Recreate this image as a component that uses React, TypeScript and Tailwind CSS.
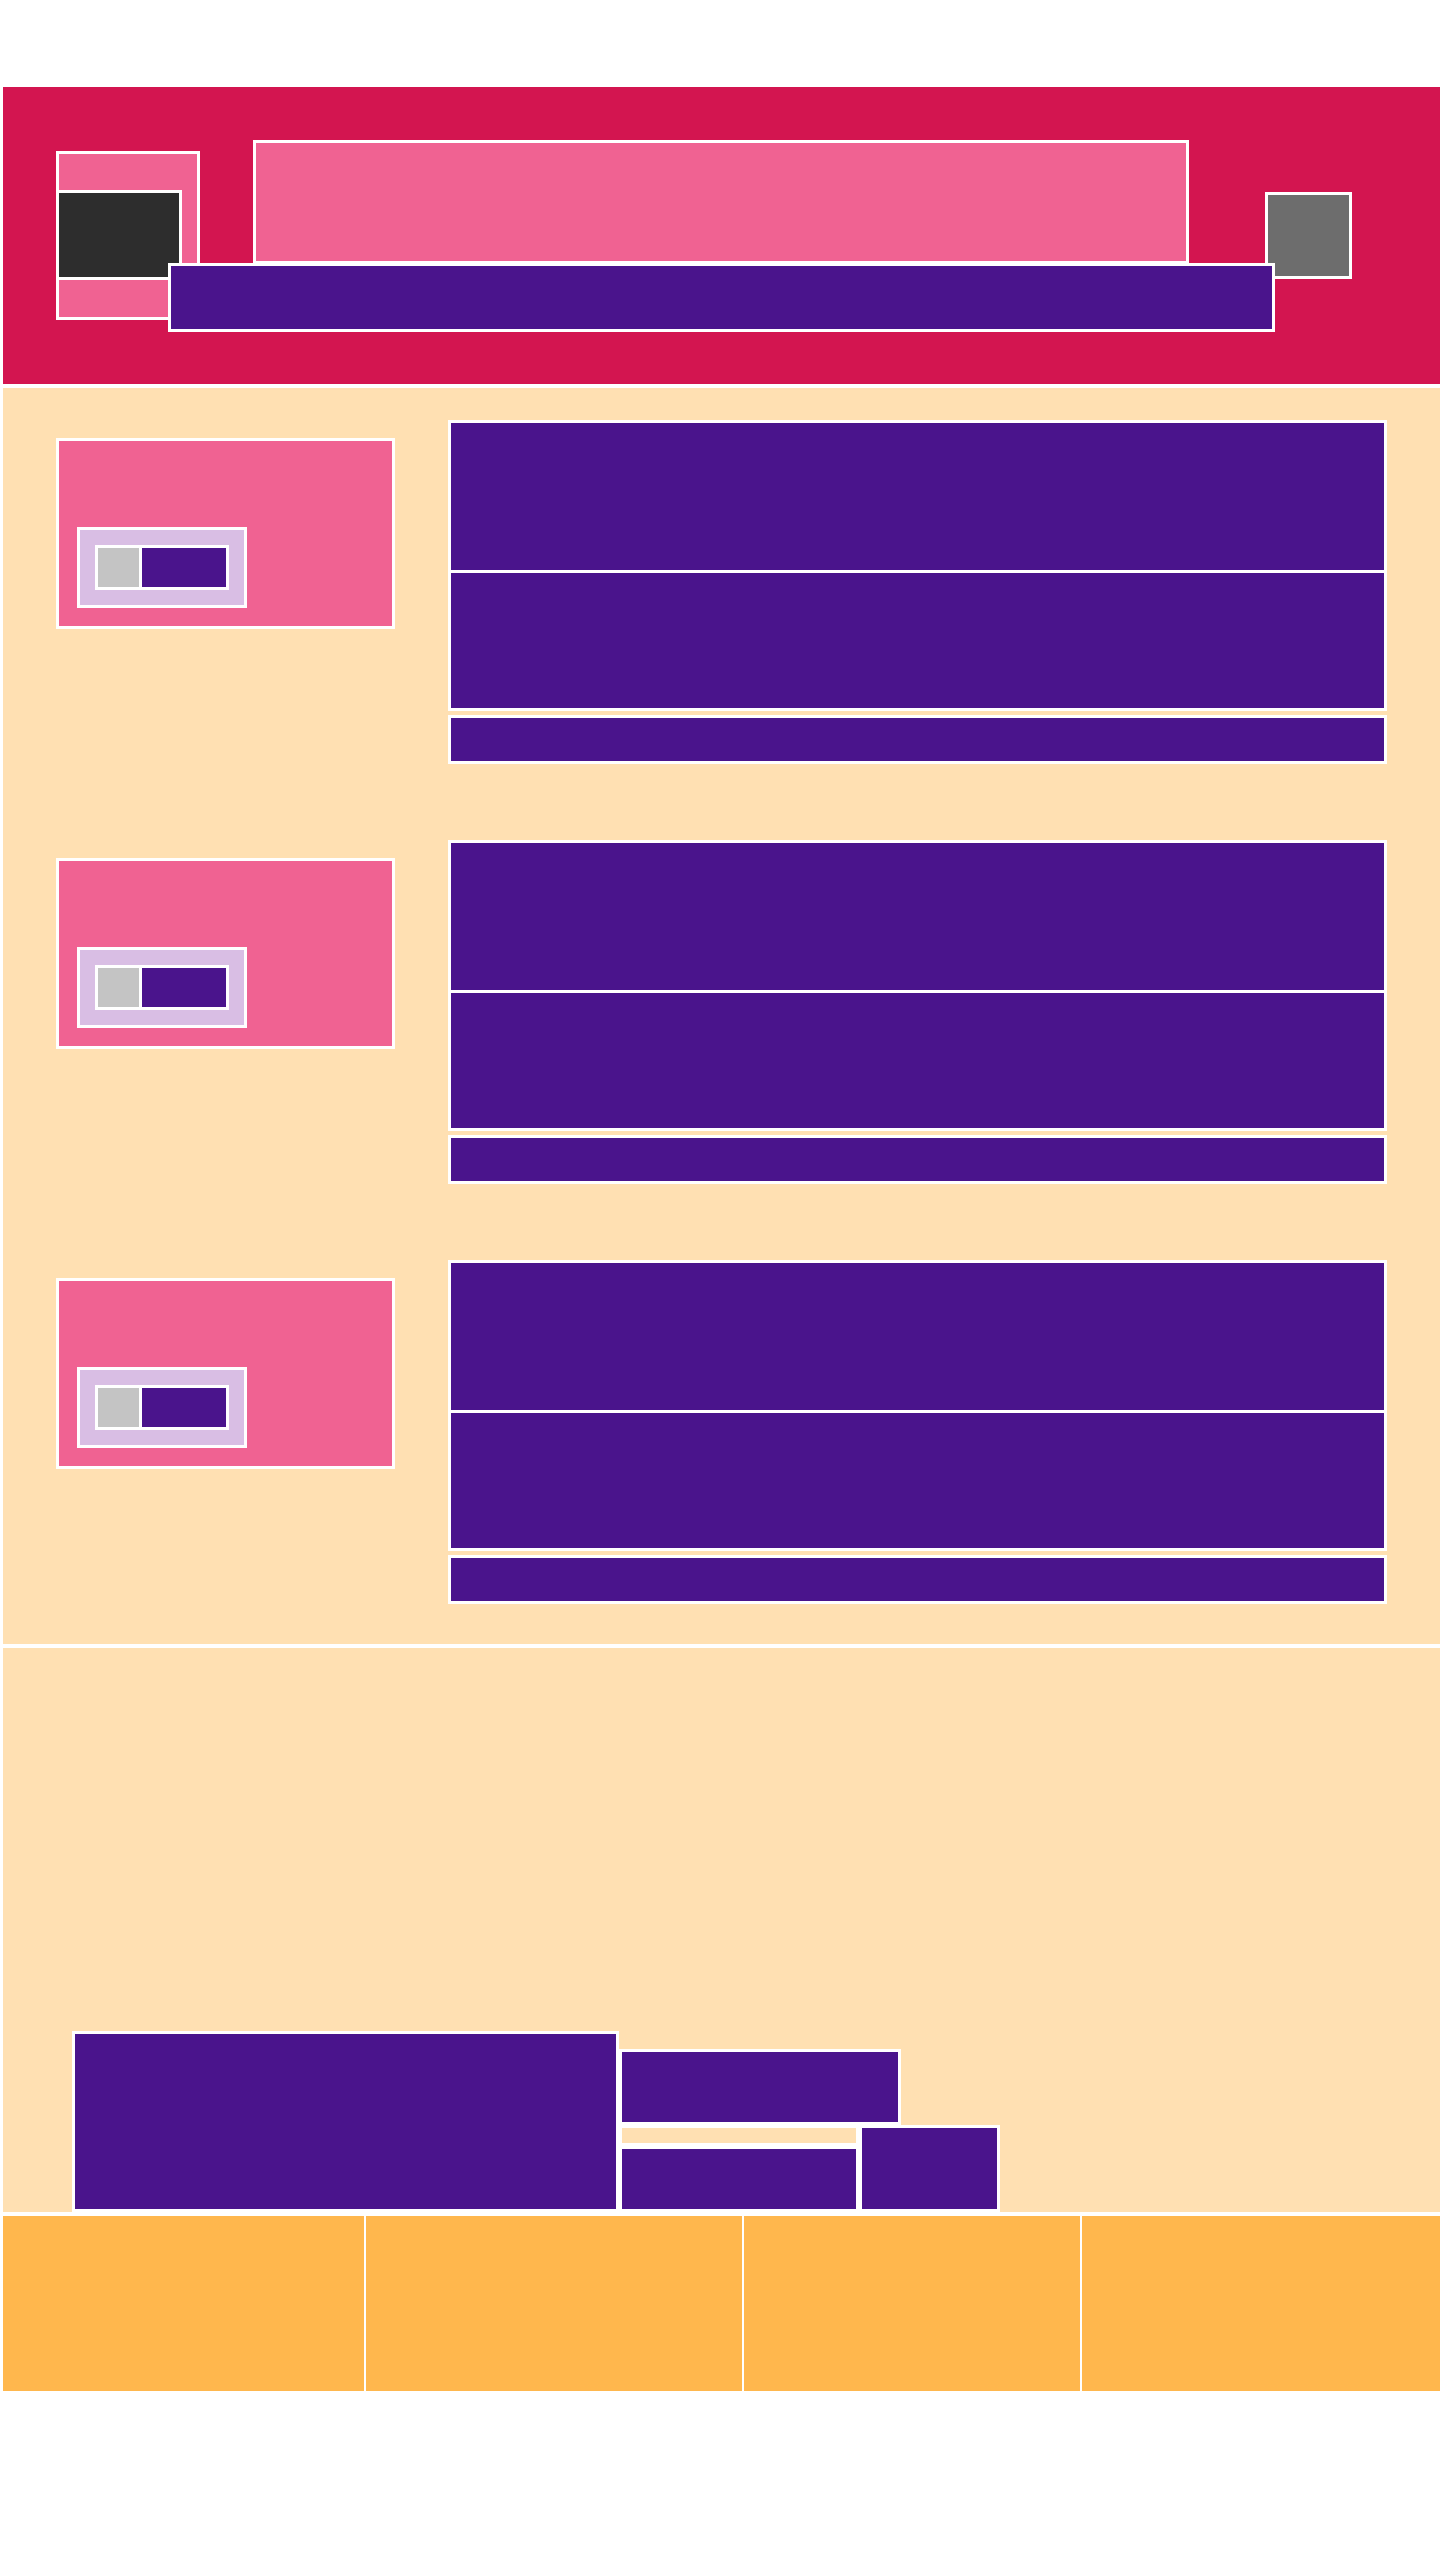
import React from 'react';

const rows = [0, 1, 2];

function Toggle() {
  return (
    <div className="ml-[18px] mt-[86px] w-[170px] h-[81px] bg-[#d9bee4] border-[3px] border-white pt-[15px] pl-[15px]">
      <div className="flex w-[134px] h-[45px] border-[3px] border-white bg-white gap-[3px]">
        <div className="w-[41px] bg-[#c4c4c4]" />
        <div className="flex-1 bg-[#4a148c]" />
      </div>
    </div>
  );
}

function Row() {
  return (
    <div className="flex gap-[53px] h-[344px]">
      <div className="mt-[18px] w-[339px] h-[191px] bg-[#f06292] border-[3px] border-white">
        <Toggle />
      </div>
      <div className="flex flex-col w-[939px]">
        <div className="h-[153px] bg-[#4a148c] border-[3px] border-white" />
        <div className="h-[138px] bg-[#4a148c] border-[3px] border-t-0 border-white" />
        <div className="mt-[4px] h-[49px] bg-[#4a148c] border-[3px] border-white" />
      </div>
    </div>
  );
}

export default function App() {
  return (
    <div className="min-h-[2560px] bg-white pt-[87px] pl-[3px] flex flex-col gap-[4px]">
      {/* header */}
      <header className="relative h-[297px] bg-[#d31550] flex items-start pl-[53px]">
        <div className="mt-[64px] w-[144px] h-[169px] bg-[#f06292] border-[3px] border-white">
          <div className="-ml-[3px] mt-[36px] w-[126px] h-[90px] bg-[#2d2d2d] border-[3px] border-white" />
        </div>
        <div className="ml-[53px] mt-[53px] w-[936px] h-[124px] bg-[#f06292] border-[3px] border-white" />
        <div className="ml-[76px] mt-[105px] w-[87px] h-[87px] bg-[#6d6d6d] border-[3px] border-white" />
        <nav className="absolute left-[165px] top-[176px] w-[1107px] h-[69px] bg-[#4a148c] border-[3px] border-white" />
      </header>

      {/* list section */}
      <section className="bg-[#ffe0b2] px-[53px] pt-[32px] pb-[40px] flex flex-col gap-[76px]">
        {rows.map((i) => (
          <Row key={i} />
        ))}
      </section>

      {/* feature blocks */}
      <section className="h-[564px] bg-[#ffe0b2] flex items-end pl-[69px]">
        <div className="w-[547px] h-[181px] bg-[#4a148c] border-[3px] border-white" />
        <div className="flex flex-col h-[163px]">
          <div className="w-[282px] h-[76px] bg-[#4a148c] border-[3px] border-white" />
          <div className="flex h-[87px]">
            <div className="flex flex-col w-[240px] justify-end">
              <div className="h-[21px] border-[3px] border-white" />
              <div className="h-[66px] bg-[#4a148c] border-[3px] border-white" />
            </div>
            <div className="w-[141px] h-[87px] bg-[#4a148c] border-[3px] border-white" />
          </div>
        </div>
      </section>

      {/* footer */}
      <footer className="h-[175px] flex gap-[2px] bg-white">
        <div className="w-[361px] bg-[#ffb74d]" />
        <div className="w-[376px] bg-[#ffb74d]" />
        <div className="w-[336px] bg-[#ffb74d]" />
        <div className="flex-1 bg-[#ffb74d]" />
      </footer>
    </div>
  );
}
